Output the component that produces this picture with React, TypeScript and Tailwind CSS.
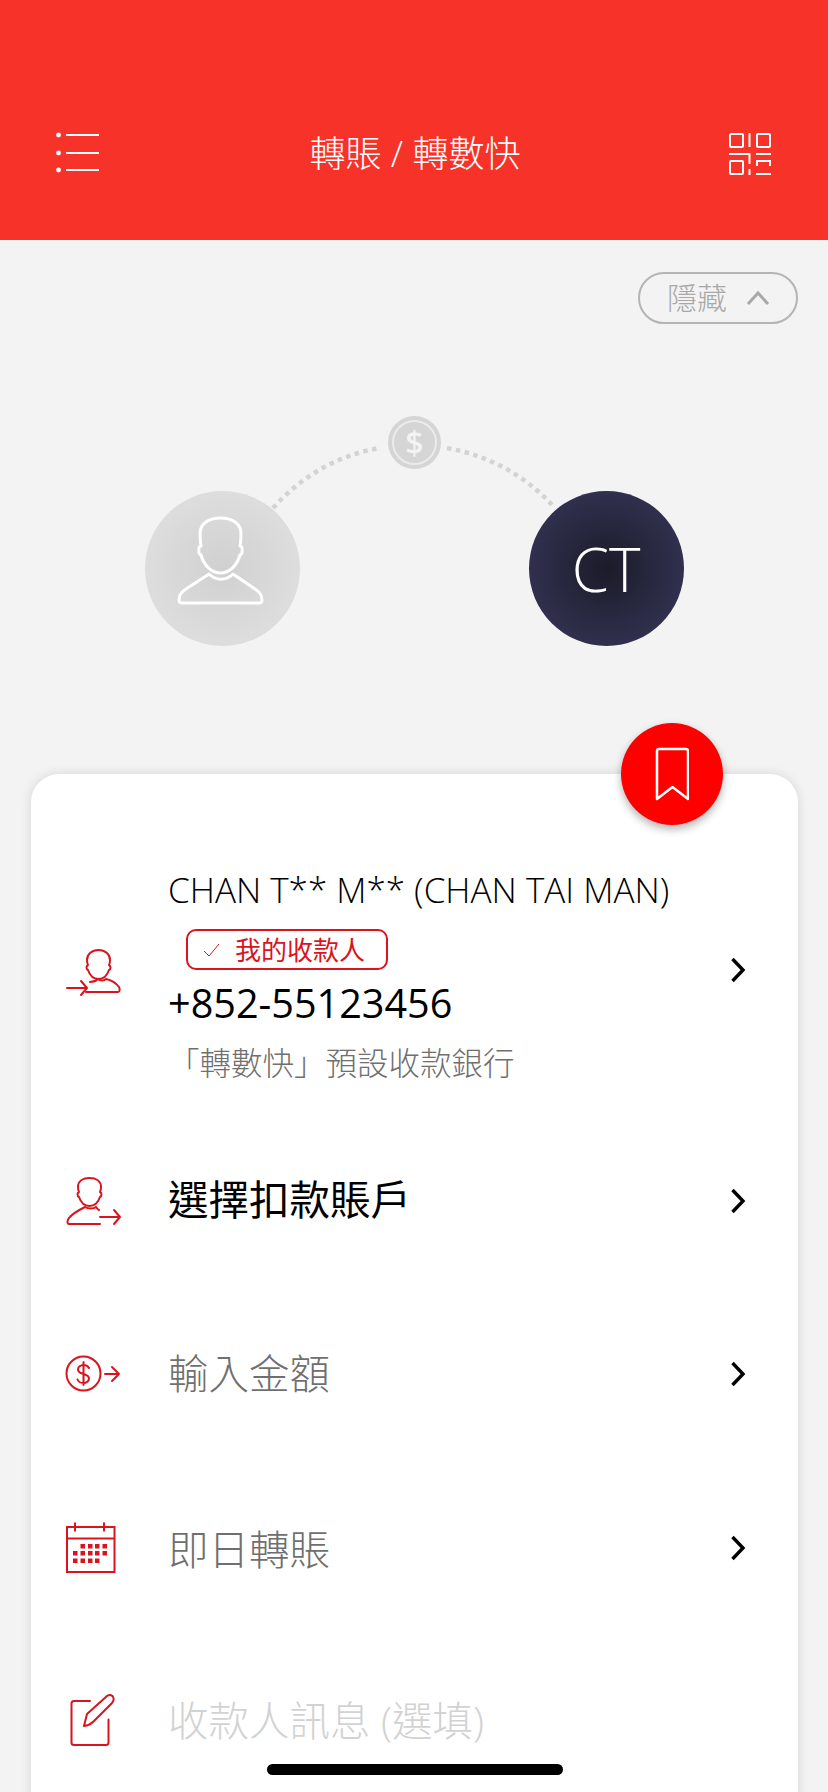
import React from 'react';

const RED = '#d9141e';

const MenuIcon = () => (
  <svg className="w-[46px] h-[42px]" viewBox="55 132 46 42" fill="none" stroke="#fff" strokeWidth="2">
    <path d="M66 135h33M66 153h33M66 170h33" />
    <circle cx="58.5" cy="135" r="2.4" fill="#fff" stroke="none" />
    <circle cx="58.5" cy="153" r="2.4" fill="#fff" stroke="none" />
    <circle cx="58.5" cy="170" r="2.4" fill="#fff" stroke="none" />
  </svg>
);

const QrIcon = () => (
  <svg className="w-[42px] h-[44px]" viewBox="729 131 42 44" fill="none" stroke="#fff" strokeWidth="2">
    <rect x="730" y="133" width="13" height="13" rx="1" />
    <rect x="757" y="133" width="13" height="13" rx="1" />
    <rect x="730" y="160" width="13" height="13" rx="1" />
    <path d="M749.5 132v14M729 153h20.5v10M756 153h15M757 165v-5h13v5M749.5 168v6M756 173h15" />
  </svg>
);

const Arc = () => (
  <svg className="absolute left-0 top-[76px] w-[828px] h-[240px]" viewBox="0 400 828 240" fill="none">
    <path d="M273 508C300 478 335 456 379 448" stroke="#d3d3d3" strokeWidth="4.5" strokeDasharray="4.5 4.5" />
    <path d="M447 448C490 456 526 476 554 507" stroke="#d3d3d3" strokeWidth="4.5" strokeDasharray="4.5 4.5" />
  </svg>
);

const PersonIcon = () => (
  <svg className="w-[90px] h-[90px] mr-[4px] mb-[15px]" viewBox="175 516 90 90" fill="none" stroke="#fff" strokeWidth="3" strokeLinejoin="round">
    <path d="M201 546C200 540 200 536 200 534C200 524 208 518 220.500 518C233 518 241 524 241 534C241 536 241 540 240 546C243 546 243 554 240 555C237 566 229 573 220.500 573C212 573 204 566 201 555C198 554 198 546 201 546Z" />
    <path d="M209 574L186 589C181 592 179 596 179 600C179 602 180 603 182 603H259C261 603 262 602 262 600C262 596 260 592 255 589L233 574C226 581 216 581 209 574Z" />
  </svg>
);

const BookmarkIcon = () => (
  <svg className="w-[34px] h-[54px]" viewBox="654 746 34 54" fill="none" stroke="#fff" strokeWidth="2.5" strokeLinejoin="round">
    <path d="M656 750a2 2 0 0 1 2-2h27a2 2 0 0 1 2 2v48l-15.500-12-15.500 12z" />
  </svg>
);

const Chevron = () => (
  <svg className="w-[16px] h-[26px] shrink-0" viewBox="0 0 16 26" fill="none" stroke="#000" strokeWidth="3.400">
    <path d="M2.500 2l10.500 11-10.500 11" />
  </svg>
);

const PayeeIcon = () => (
  <svg className="w-[60px] h-[52px]" viewBox="64 946 60 52" fill="none" stroke={RED} strokeWidth="2" strokeLinecap="round" strokeLinejoin="round">
    <path d="M88 964c-2 1-2 4 0 5 2 6 6 9 10.500 9s8.500-3 10.500-9c2-1 2-4 0-5 1-2 1-4 1-5 0-6-5-10-11.500-10s-11.500 4-11.500 10c0 1 0 3 1 5z" />
    <path d="M90 981c3 0 6-1 8-3 2 2 6 2 8 0 5 1 10 4 13 8 1 2 1 5-1 5h-32" />
    <path d="M67 987h20M81 980l6 7-6 7" />
  </svg>
);

const PayerIcon = () => (
  <svg className="w-[60px] h-[50px]" viewBox="64 1177 60 50" fill="none" stroke={RED} strokeWidth="2" strokeLinecap="round" strokeLinejoin="round">
    <path d="M79 1193c-2 1-2 4 0 5 2 6 6 9 10.500 9s8.500-3 10.500-9c2-1 2-4 0-5 1-2 1-4 1-5 0-6-5-9-11.500-9s-11.500 3-11.500 9c0 1 0 3 1 5z" />
    <path d="M99 1211c-2-1-2-2-3-3-2 2-8 2-11 0-6 3-12 6-16 11-2 2-2 6 0 6h31" />
    <path d="M100 1218h20M114 1211l6 7-6 7" />
  </svg>
);

const AmountIcon = () => (
  <svg className="w-[60px] h-[38px]" viewBox="64 1356 60 38" fill="none" stroke={RED} strokeWidth="2" strokeLinecap="round" strokeLinejoin="round">
    <circle cx="83.500" cy="1374.500" r="17" />
    <path d="M89 1369c-1-2-3-3-5.500-3-3 0-5.500 2-5.500 4.500s2 3.500 5.500 4.500 5.500 2 5.500 4.500-2.500 4.500-5.500 4.500c-2.500 0-5-1-6-3.500M83.500 1363v23" />
    <path d="M105 1375h14M112 1368l7 7-7 7" />
  </svg>
);

const calendarDots = [
  [80.5, 1544], [88, 1544], [95, 1544], [102.5, 1544],
  [73, 1551], [80.5, 1551], [88, 1551], [95, 1551], [102.5, 1551],
  [73, 1558.5], [80.5, 1558.5], [88, 1558.5], [95, 1558.5],
];

const CalendarIcon = () => (
  <svg className="w-[60px] h-[52px]" viewBox="64 1522 60 52" fill="none" stroke={RED} strokeWidth="2">
    <rect x="67" y="1527" width="47.500" height="45" />
    <path d="M67 1538.500h47.500M75 1522.500v9M104 1522.500v9" />
    <g fill={RED} stroke="none">
      {calendarDots.map(([x, y]) => (
        <rect key={`${x}-${y}`} x={x} y={y} width="4.500" height="4.500" />
      ))}
    </g>
  </svg>
);

const NoteIcon = () => (
  <svg className="w-[60px] h-[54px]" viewBox="64 1694 60 54" fill="none" stroke={RED} strokeWidth="2" strokeLinecap="round" strokeLinejoin="round">
    <path d="M90 1701H74a2.500 2.500 0 0 0-2.500 2.500v39a2.500 2.500 0 0 0 2.500 2.500h32a2.500 2.500 0 0 0 2.500-2.500v-23" />
    <path d="M84 1726l3-12 20-18c3-2 6-.500 6.500 2 .500 2-.500 4-2 5.500l-18 18c-3 3-6 4-9.500 4.500z" />
  </svg>
);

const Row = ({ icon, label, tone, h, chevron = true }: { icon: React.ReactNode; label: string; tone: string; h: string; chevron?: boolean }) => (
  <div className={`flex items-center pl-[33px] pr-[52px] ${h}`}>
    <div className="w-[60px] mr-[44px] flex justify-center">{icon}</div>
    <div className={`flex-1 text-[40.5px] leading-none ${tone}`}>{label}</div>
    {chevron && <Chevron />}
  </div>
);

export default function App() {
  return (
    <div className="relative w-[828px] h-[1792px] overflow-hidden bg-[#f3f3f3] font-['Open_Sans','Noto_Sans_CJK_TC',sans-serif]">
      <header className="h-[240px] bg-[#f73329] flex items-start justify-between pt-[132px] pl-[55px] pr-[57px] text-white">
        <MenuIcon />
        <h1 className="text-[36px] font-light leading-[44px]">轉賬 / 轉數快</h1>
        <QrIcon />
      </header>

      <div className="flex justify-end pt-[32px] pr-[30px]">
        <div className="w-[160px] h-[52px] rounded-full border-2 border-[#b4b4b4] flex items-center pl-[27px] gap-[19px] text-[#a8a8a8]">
          <span className="text-[30px] leading-none font-light">隱藏</span>
          <svg className="w-[24px] h-[16px]" viewBox="0 0 24 16" fill="none" stroke="#a8a8a8" strokeWidth="3">
            <path d="M2 14L12 3l10 11" />
          </svg>
        </div>
      </div>

      <section className="relative h-[323px] pt-[167px]">
        <Arc />
        <div className="flex justify-center gap-[229px]">
          <div className="w-[155px] h-[155px] rounded-full flex items-center justify-center bg-[radial-gradient(circle,#d0d0d0_0%,#dddddd_70%)]">
            <PersonIcon />
          </div>
          <div className="w-[155px] h-[155px] rounded-full flex items-center justify-center text-white text-[60px] font-light bg-[radial-gradient(circle,#1b1b29_0%,#30304e_70%)]">
            CT
          </div>
        </div>
        <div className="absolute left-[388px] top-[92px] w-[53px] h-[53px] rounded-full bg-[#d5d5d5] flex items-center justify-center">
          <div className="w-[45px] h-[45px] rounded-full border-2 border-[#ebebeb] flex items-center justify-center text-[#f3f3f3] text-[32px] font-semibold leading-none">
            $
          </div>
        </div>
      </section>

      <main className="relative mx-[31px] w-[767px] h-[1100px] mt-[127px] bg-white rounded-[28px] shadow-[0_0_12px_rgba(0,0,0,0.12)] pt-[88px]">
        <div className="absolute right-[75px] top-[-51px] w-[102px] h-[102px] rounded-full bg-[#fe0000] shadow-[0_4px_8px_rgba(0,0,0,0.3)] flex items-center justify-center">
          <BookmarkIcon />
        </div>

        <div className="h-[252px] flex items-start pl-[33px] pr-[52px]">
          <div className="w-[60px] mr-[44px] flex justify-center mt-[85px]">
            <PayeeIcon />
          </div>
          <div className="flex-1 flex flex-col">
            <div className="text-[35px] font-light leading-[56px] text-black whitespace-nowrap">CHAN T** M** (CHAN TAI MAN)</div>
            <div className="ml-[18px] mt-[11px] w-[202px] h-[41px] border-2 border-[#d9141e] rounded-[10px] flex items-center pl-[15px] gap-[15px]">
              <svg className="w-[17px] h-[14px]" viewBox="0 0 17 14" fill="none" stroke="#d9141e" strokeWidth="1">
                <path d="M1 8l5 5L16 1" />
              </svg>
              <span className="text-[26px] leading-none text-[#d9141e]">我的收款人</span>
            </div>
            <div className="mt-[4px] text-[39.600px] leading-[58px] text-black">+852-55123456</div>
            <div className="mt-[1px] text-[31.500px] font-light leading-[60px] text-[#6f6f6f] whitespace-nowrap">「轉數快」預設收款銀行</div>
          </div>
          <div className="mt-[95px]">
            <Chevron />
          </div>
        </div>

        <Row icon={<PayerIcon />} label="選擇扣款賬戶" tone="text-black" h="h-[173px]" />
        <Row icon={<AmountIcon />} label="輸入金額" tone="text-[#6f6f6f] font-light pt-[2px]" h="h-[173px]" />
        <Row icon={<CalendarIcon />} label="即日轉賬" tone="text-[#6f6f6f] font-light pt-[6px]" h="h-[175px]" />
        <Row icon={<NoteIcon />} label="收款人訊息 (選填)" tone="text-[#d2d2d2] font-light" h="h-[172px]" chevron={false} />
      </main>

      <div className="absolute left-[267px] top-[1764px] w-[296px] h-[11px] rounded-full bg-black" />
    </div>
  );
}
